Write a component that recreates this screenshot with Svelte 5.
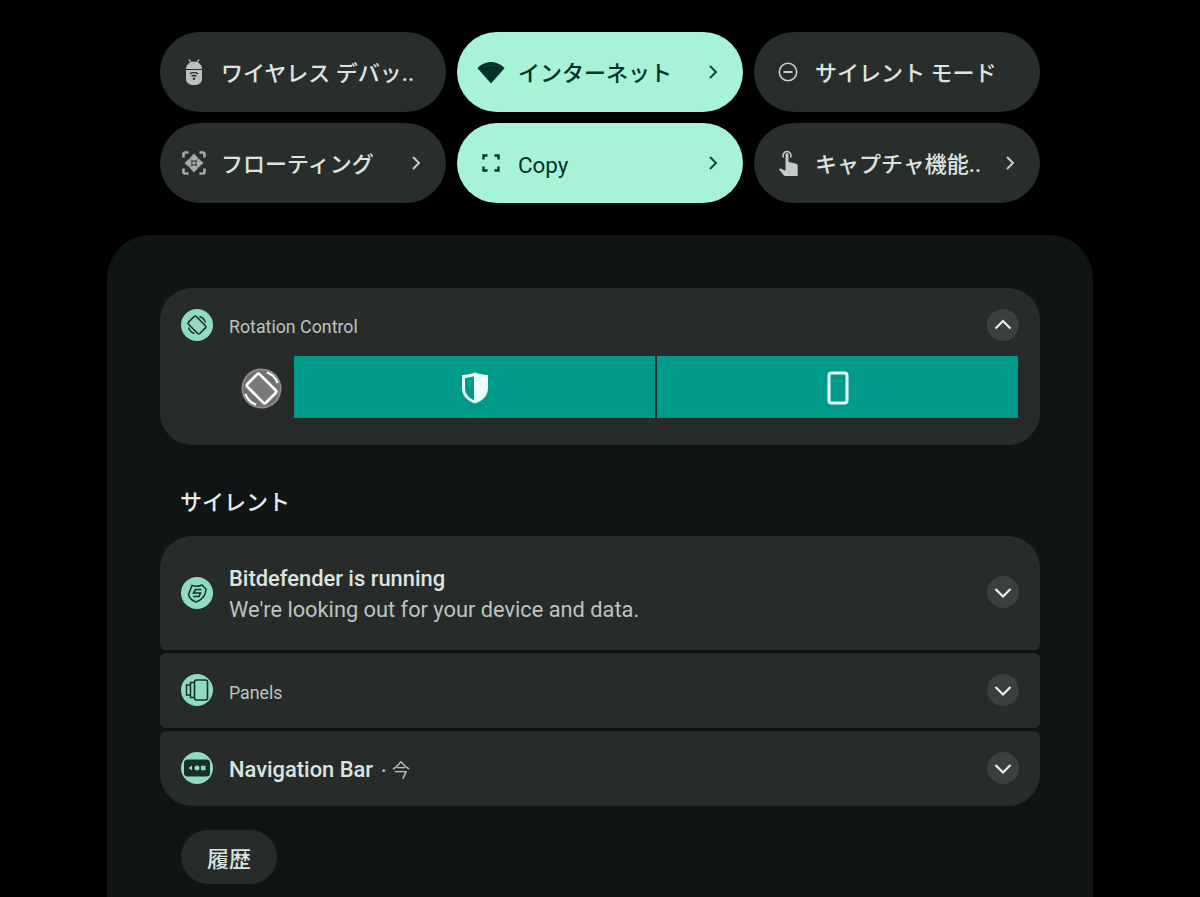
<script>
  const groups = [
    { label: 'Panels', h: 'mid', icon: 'panels' },
    { label: 'Navigation Bar', h: 'last', icon: 'nav' }
  ];
</script>

<div class="page">
  <div class="tiles">
    <div class="tile">
      <span class="ti">
        <svg viewBox="0 0 24 28" width="24" height="28">
          <path d="M7 1.500 9.200 5M17 1.500 14.800 5" stroke="#b9c2bd" stroke-width="1.400" fill="none" />
          <path d="M4 11C4 6.500 7.500 3.800 12 3.800S20 6.500 20 11z" fill="#b9c2bd" />
          <path d="M4 12H20V21C20 25 16.500 27 12 27S4 25 4 21z" fill="#b9c2bd" />
          <path d="M7.800 15.800C10 14.200 14 14.200 16.200 15.800M9.500 18.300C11 17.300 13 17.300 14.500 18.300" stroke="#282e2c" stroke-width="1.300" fill="none" />
          <circle cx="12" cy="20.800" r="1.200" fill="#282e2c" />
        </svg>
      </span>
      <span class="tl">ワイヤレス デバッ..</span>
    </div>
    <div class="tile on">
      <span class="ti">
        <svg viewBox="0 0 28 24" width="28" height="24">
          <path d="M14 23.500 .5 8.200C4 4.300 9 2 14 2S24 4.300 27.500 8.200z" fill="#06302a" />
          <path d="M5 7.500C7.500 6 10.800 5.200 14 5.200S20.500 6 23 7.500" fill="none" stroke="#1d5347" stroke-width=".6" />
        </svg>
      </span>
      <span class="tl">インターネット</span>
      <svg class="chev" viewBox="0 0 12 16" width="12" height="16"><path d="M3 2l6 6-6 6" /></svg>
    </div>
    <div class="tile">
      <span class="ti">
        <svg viewBox="0 0 24 24" width="24" height="24">
          <circle cx="12" cy="12" r="8.700" fill="none" stroke="#c4cdc9" stroke-width="1.600" />
          <rect x="7.500" y="11" width="9" height="2" fill="#c4cdc9" />
        </svg>
      </span>
      <span class="tl">サイレント モード</span>
    </div>

    <div class="tile">
      <span class="ti">
        <svg viewBox="0 0 24 24" width="24" height="24">
          <path d="M1.500 6.500V3a1.500 1.500 0 0 1 1.500-1.500H6.500M17.500 1.500H21A1.500 1.500 0 0 1 22.500 3V6.500M22.500 17.500V21A1.500 1.500 0 0 1 21 22.500H17.500M6.500 22.500H3A1.500 1.500 0 0 1 1.500 21V17.500" fill="none" stroke="#a3aca8" stroke-width="2.600" />
          <path d="M12 2.500 16.500 7.500 14 9.500H10L7.500 7.500zM12 21.500 7.500 16.500 10 14.500H14L16.500 16.500zM2.500 12 7.500 7.500 9.500 10V14L7.500 16.500zM21.500 12 16.500 16.500 14.500 14V10L16.500 7.500z" fill="#a3aca8" />
          <circle cx="12" cy="12" r="1.800" fill="#a3aca8" />
        </svg>
      </span>
      <span class="tl">フローティング</span>
      <svg class="chev" viewBox="0 0 12 16" width="12" height="16"><path d="M3 2l6 6-6 6" /></svg>
    </div>
    <div class="tile on">
      <span class="ti">
        <svg viewBox="0 0 24 24" width="24" height="24">
          <path d="M4.500 8.500V4.500H8.500M15.500 4.500H19.500V8.500M19.500 15.500V19.500H15.500M8.500 19.500H4.500V15.500" fill="none" stroke="#06302a" stroke-width="2.400" />
        </svg>
      </span>
      <span class="tl latin">Copy</span>
      <svg class="chev" viewBox="0 0 12 16" width="12" height="16"><path d="M3 2l6 6-6 6" /></svg>
    </div>
    <div class="tile">
      <span class="ti">
        <svg viewBox="0 0 24 28" width="24" height="28">
          <path d="M7.500 8.500a4 4 0 1 1 7 0" fill="none" stroke="#c4cdc9" stroke-width="1.500" />
          <path d="M9.500 5.500a1.500 1.500 0 0 1 3 0V13l7 1.500c1.500.3 2.200 1.500 2.200 3V27H8.500L3 20.500l1.200-1.300 5.300 2.500z" fill="#c4cdc9" />
        </svg>
      </span>
      <span class="tl">キャプチャ機能..</span>
      <svg class="chev" viewBox="0 0 12 16" width="12" height="16"><path d="M3 2l6 6-6 6" /></svg>
    </div>
  </div>

  <div class="panel">
    <div class="card rotation">
      <div class="head">
        <span class="app">
          <svg viewBox="0 0 32 32" width="32" height="32">
            <g transform="rotate(-45 16 16)">
              <rect x="10.500" y="8" width="11" height="16" rx="1.500" fill="none" stroke="#17302a" stroke-width="1.600" />
            </g>
            <path d="M18.500 7.500A9 9 0 0 1 24.500 13.500M13.500 24.500A9 9 0 0 1 7.500 18.500" fill="none" stroke="#17302a" stroke-width="1.400" />
          </svg>
        </span>
        <span class="small">Rotation Control</span>
        <span class="exp">
          <svg viewBox="0 0 32 32" width="32" height="32"><path d="M8.500 19.500 16 12l7.500 7.500" /></svg>
        </span>
      </div>
      <div class="controls">
        <svg class="rot" viewBox="0 0 42 42" width="41" height="41">
          <circle cx="21" cy="21" r="20.500" fill="#8f8f8f" />
          <circle cx="21" cy="21" r="18.800" fill="#707070" />
          <g transform="rotate(-45 21 21)">
            <rect x="12" y="7.500" width="18" height="27" rx="2" fill="#7a7a7a" stroke="#fff" stroke-width="2.800" />
          </g>
          <path d="M26.500 4.500A17.500 17.500 0 0 1 37.500 15.500M15.500 37.500A17.500 17.500 0 0 1 4.500 26.500" fill="none" stroke="#fff" stroke-width="2.200" />
        </svg>
        <div class="strip">
          <div class="seg">
            <svg viewBox="0 0 30 34" width="30" height="34">
              <path d="M15 1.500C19 2.800 23.500 3.800 28 4V17C28 25 22 30.500 15 32.500 8 30.500 2 25 2 17V4C6.500 3.800 11 2.800 15 1.500z" fill="#eafffb" />
              <path d="M14 5.200C11.500 6 8.500 6.700 5 7V17C5 22.500 8.500 27 14 29.200z" fill="#009a8a" />
            </svg>
          </div>
          <div class="seg">
            <svg viewBox="0 0 22 34" width="22" height="34">
              <rect x="2" y="2" width="18" height="30" rx="2.500" fill="none" stroke="#eafffb" stroke-width="3" />
            </svg>
          </div>
        </div>
      </div>
    </div>

    <h2>サイレント</h2>

    <div class="list">
      <div class="card row first">
        <span class="app">
          <svg viewBox="0 0 32 32" width="32" height="32">
            <path d="M21 8 25 12C25 18 21.500 22.500 15.500 25 11.500 24 8.500 21 7.500 17.500L11 8.500C14.500 9.500 18 9.500 21 8z" fill="none" stroke="#17302a" stroke-width="1.500" />
            <path d="M20.500 12.500H14.500L12.500 16H19.500L18 19.500H12" fill="none" stroke="#17302a" stroke-width="1.600" />
          </svg>
        </span>
        <div class="body">
          <div class="title">Bitdefender is running</div>
          <div class="sub">We're looking out for your device and data.</div>
        </div>
        <span class="exp"><svg viewBox="0 0 32 32" width="32" height="32"><path d="M8.500 13 16 20.500 23.500 13" /></svg></span>
      </div>

      {#each groups as g}
        <div class="card row {g.h}">
          <span class="app">
            {#if g.icon === 'panels'}
              <svg viewBox="0 0 32 32" width="32" height="32">
                <rect x="5.500" y="11" width="5" height="10" fill="none" stroke="#17302a" stroke-width="1.500" />
                <rect x="9.500" y="8.500" width="5" height="15" fill="#8fdcc0" stroke="#17302a" stroke-width="1.500" />
                <rect x="13.500" y="6" width="13" height="20" rx="2" fill="#8fdcc0" stroke="#17302a" stroke-width="1.600" />
              </svg>
            {:else}
              <svg viewBox="0 0 32 32" width="32" height="32">
                <rect x="3" y="7.500" width="26" height="17" rx="3.500" fill="#17302a" />
                <path d="M7.500 16l3.500-2.500v5z" fill="#8fdcc0" />
                <circle cx="16" cy="16" r="2.500" fill="#8fdcc0" />
                <rect x="20" y="13.800" width="4.500" height="4.500" fill="#8fdcc0" />
              </svg>
            {/if}
          </span>
          {#if g.icon === 'panels'}
            <span class="small">{g.label}</span>
          {:else}
            <span class="title nav">{g.label}</span>
            <span class="when"><b>·</b> 今</span>
          {/if}
          <span class="exp"><svg viewBox="0 0 32 32" width="32" height="32"><path d="M8.500 13 16 20.500 23.500 13" /></svg></span>
        </div>
      {/each}
    </div>

    <div class="history">履歴</div>
  </div>
</div>

<style>
  :global(body) {
    margin: 0;
    background: #000;
  }
  .page {
    height: 897px;
    overflow: hidden;
    padding-top: 32px;
    box-sizing: border-box;
    font-family: Roboto, "Noto Sans CJK JP", sans-serif;
  }
  .tiles {
    display: grid;
    grid-template-columns: repeat(3, 286px);
    grid-auto-rows: 80px;
    gap: 11px;
    width: 880px;
    margin: 0 auto;
  }
  .tile {
    display: flex;
    align-items: center;
    gap: 13px;
    padding: 0 23px 0 20px;
    background: #282e2c;
    border-radius: 40px;
    color: #dde4e0;
    font-size: 22px;
    font-weight: 500;
    white-space: nowrap;
  }
  .tile.on {
    background: #a7f3d8;
    color: #06302a;
  }
  .ti {
    flex: none;
    display: flex;
    justify-content: center;
    width: 28px;
  }
  .tl {
    flex: 1;
    overflow: hidden;
    margin-top: -2px;
  }
  .tile .latin {
    margin-top: 3px;
    font-size: 22.400px;
    font-weight: 400;
  }
  .chev {
    flex: none;
    margin-left: -1px;
    margin-right: 1px;
  }
  .chev path {
    fill: none;
    stroke: #c4cdc9;
    stroke-width: 2;
  }
  .on .chev path {
    stroke: #0b4a40;
  }
  .panel {
    width: 986px;
    height: 700px;
    box-sizing: border-box;
    margin: 32px auto 0;
    padding: 53px;
    background: #0f1514;
    border-radius: 44px 44px 0 0;
  }
  .card {
    background: #272c2a;
  }
  .rotation {
    height: 157px;
    box-sizing: border-box;
    padding: 21px 21px 0;
    border-radius: 32px;
  }
  .head {
    display: flex;
    align-items: center;
    gap: 16px;
  }
  .app {
    flex: none;
    width: 32px;
    height: 32px;
    border-radius: 50%;
    background: #8fdcc0;
  }
  .app svg,
  .exp svg {
    display: block;
  }
  .small {
    flex: 1;
    padding-top: 3px;
    font-size: 17.800px;
    color: #bcc4c0;
  }
  .exp {
    flex: none;
    width: 32px;
    height: 32px;
    margin-left: auto;
    border-radius: 50%;
    background: #3b403f;
  }
  .exp path {
    fill: none;
    stroke: #e8eeea;
    stroke-width: 2.200;
  }
  .controls {
    display: flex;
    align-items: center;
    gap: 12px;
    margin: 15px 1px 0 60px;
  }
  .rot {
    flex: none;
    margin-top: 2px;
  }
  .strip {
    flex: 1;
    display: flex;
    gap: 2px;
    height: 62px;
  }
  .seg {
    flex: 1;
    display: flex;
    align-items: center;
    justify-content: center;
    padding-top: 2px;
    background: #009a8a;
  }
  h2 {
    margin: 43px 0 18px 20px;
    height: 30px;
    font-size: 22px;
    line-height: 30px;
    font-weight: 500;
    color: #e6ebe8;
  }
  .list {
    display: flex;
    flex-direction: column;
    gap: 3px;
  }
  .row {
    display: flex;
    align-items: center;
    gap: 16px;
    height: 75px;
    box-sizing: border-box;
    padding: 0 21px;
    border-radius: 6px;
  }
  .row.first {
    height: 114px;
    border-radius: 32px 32px 6px 6px;
  }
  .row.last {
    border-radius: 6px 6px 32px 32px;
  }
  .row.first .exp {
    margin-top: -2px;
  }
  .row.mid .app,
  .row.mid .exp,
  .row.last .app,
  .row.last .exp {
    margin-top: -2px;
  }
  .body {
    flex: 1;
    padding-top: 1px;
  }
  .title {
    font-size: 21.900px;
    line-height: 31px;
    font-weight: 500;
    color: #dde4e0;
  }
  .nav {
    padding-top: 1px;
  }
  .sub {
    font-size: 21.800px;
    line-height: 31px;
    color: #bcc4c0;
  }
  .when {
    margin-left: -8px;
    font-size: 18px;
    word-spacing: 1px;
    color: #bcc4c0;
  }
  .history {
    display: flex;
    align-items: center;
    justify-content: center;
    width: 96px;
    height: 54px;
    margin: 24px 0 0 21px;
    border-radius: 27px;
    background: #272c2a;
    font-size: 22px;
    font-weight: 500;
    color: #dde4e0;
  }
</style>
